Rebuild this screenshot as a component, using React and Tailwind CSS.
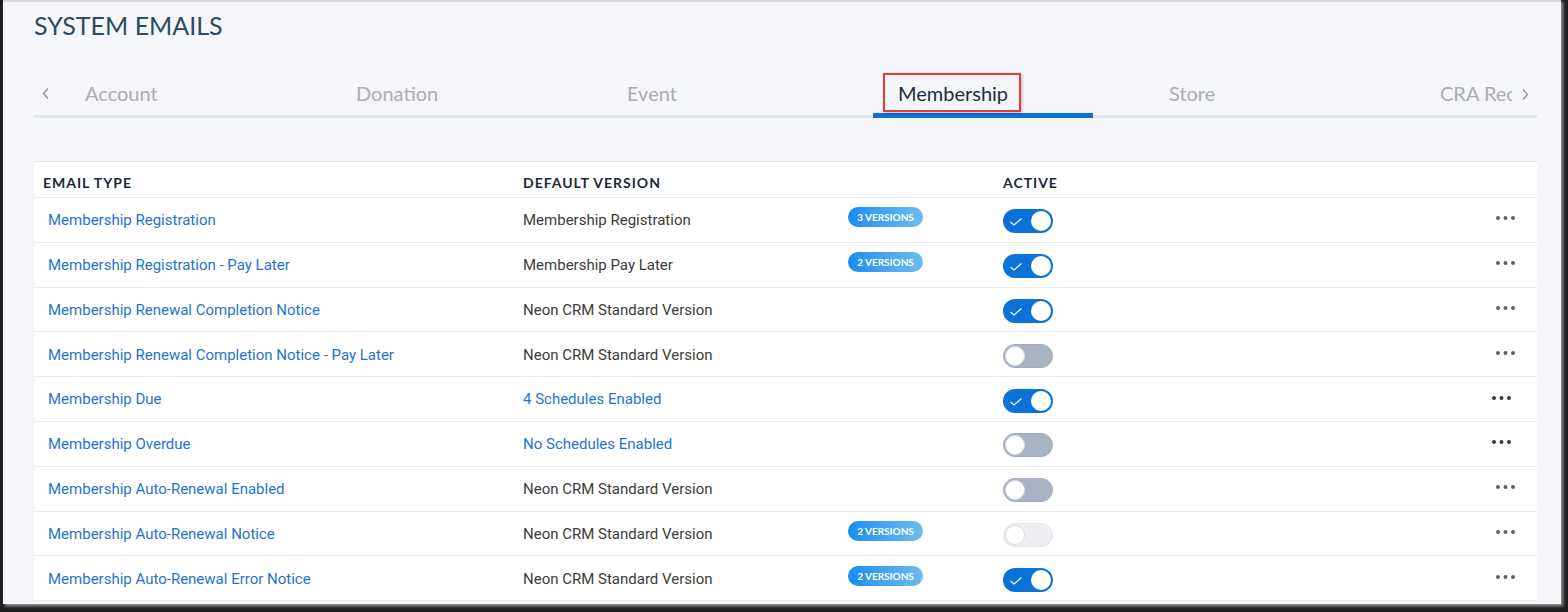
import React from 'react';

const tabs = ['Account', 'Donation', 'Event', 'Membership', 'Store', 'CRA Receipts'];

const rows = [
    { type: 'Membership Registration', version: 'Membership Registration', badge: '3 VERSIONS', active: 'on' },
    { type: 'Membership Registration - Pay Later', version: 'Membership Pay Later', badge: '2 VERSIONS', active: 'on' },
    { type: 'Membership Renewal Completion Notice', version: 'Neon CRM Standard Version', active: 'on' },
    { type: 'Membership Renewal Completion Notice - Pay Later', version: 'Neon CRM Standard Version', active: 'off' },
    { type: 'Membership Due', version: '4 Schedules Enabled', link: true, active: 'on', dark: true },
    { type: 'Membership Overdue', version: 'No Schedules Enabled', link: true, active: 'off', dark: true },
    { type: 'Membership Auto-Renewal Enabled', version: 'Neon CRM Standard Version', active: 'off' },
    { type: 'Membership Auto-Renewal Notice', version: 'Neon CRM Standard Version', badge: '2 VERSIONS', active: 'disabled' },
    { type: 'Membership Auto-Renewal Error Notice', version: 'Neon CRM Standard Version', badge: '2 VERSIONS', active: 'on' },
];

function Chevron({ dir }) {
    return (
        <svg width="8" height="11" viewBox="0 0 8 11" className="shrink-0">
            {dir === 'left'
                ? <polyline points="6,0.5 1.5,5.5 6,10.5" fill="none" stroke="#8c8c8c" strokeWidth="1.3" />
                : <polyline points="2,0.5 6.5,5.5 2,10.5" fill="none" stroke="#8c8c8c" strokeWidth="1.3" />}
        </svg>
    );
}

function Toggle({ state }) {
    if (state === 'on') {
        return (
            <div className="relative w-[50px] h-[24px] rounded-full bg-[#0b72d8] shrink-0 mt-[3px]">
                <svg width="12" height="8" viewBox="0 0 12 8" className="absolute left-[7px] top-[9px]">
                    <polyline points="0.5,4 4,7 11.5,0.5" fill="none" stroke="#ffffff" strokeWidth="1.1" />
                </svg>
                <div className="absolute right-[2px] top-[2px] w-[20px] h-[20px] rounded-full bg-white" />
            </div>
        );
    }
    const disabled = state === 'disabled';
    return (
        <div className={`relative w-[50px] h-[24px] rounded-full shrink-0 mt-[3px] border ${disabled ? 'bg-[#eceef2] border-[#e2e5ea]' : 'bg-[#a9b3c3] border-[#a3adbd]'}`}>
            <div className="absolute left-[1px] top-[1px] w-[20px] h-[20px] rounded-full bg-white border border-[#d8dce3]" />
        </div>
    );
}

function Dots({ dark }) {
    return (
        <svg width="19" height="4" viewBox="0 0 19 4" className="mb-[3px]">
            <circle cx="2" cy="2" r="2" fill={dark ? '#2e3944' : '#59636e'} />
            <circle cx="9.5" cy="2" r="2" fill={dark ? '#2e3944' : '#59636e'} />
            <circle cx="17" cy="2" r="2" fill={dark ? '#2e3944' : '#59636e'} />
        </svg>
    );
}

export default function App() {
    return (
        <div className="w-[1568px] h-[612px] bg-[#1f1f1f] overflow-hidden">
            <div className="ml-[3px] w-[1558px] h-[604px] bg-[#f4f6fa] border-t-2 border-[#d8d9dc] shadow-[2px_2px_3px_rgba(170,170,170,0.9)] overflow-hidden">
                <div className="pl-[31px] w-[1534px]">
                    <h1 className="pt-[8px] text-[25px] leading-[30px] text-[#2d4b60] font-['Lato',sans-serif] font-normal">SYSTEM EMAILS</h1>

                    {/* tabs */}
                    <div className="relative mt-[41px] flex border-b-[3px] border-[#e2e5ec] pl-[8px] font-['Lato',sans-serif]">
                        <div className="self-start mt-[7px]"><Chevron dir="left" /></div>
                        <div className="ml-[10px] w-[1452px] overflow-hidden -mb-[3px]">
                            <div className="flex gap-[51px]">
                                {tabs.map((t) => (
                                    <div
                                        key={t}
                                        className={`shrink-0 w-[220px] pl-[25px] pb-[8px] text-[20px] leading-[24px] whitespace-nowrap border-b-[5px] ${t === 'Membership' ? 'text-[#1d2d3b] border-[#0b72d8]' : 'text-[#adadad] border-transparent'}`}
                                    >
                                        {t}
                                    </div>
                                ))}
                            </div>
                        </div>
                        <div className="self-start mt-[8px] ml-[9px]"><Chevron dir="right" /></div>
                        <div className="absolute left-[849px] -top-[8px] w-[138px] h-[39px] border-2 border-[#e53b3d] shadow-[1px_1px_3px_rgba(0,0,0,0.25)] pointer-events-none" />
                    </div>

                    {/* table */}
                    <div className="mt-[43px] w-[1503px] bg-white border-t border-[#e1e4ea]">
                        <div className="flex h-[36px] pt-[12px] border-b border-[#e8ebf0] text-[14px] leading-[17px] font-bold tracking-[0.07em] text-[#1a2a39] font-['Lato',sans-serif]">
                            <div className="w-[489px] pl-[9px]">EMAIL TYPE</div>
                            <div className="w-[480px]">DEFAULT VERSION</div>
                            <div>ACTIVE</div>
                        </div>
                        {rows.map((r) => (
                            <div key={r.type} className="flex items-center h-[44.8px] border-b border-[#e8ebf0] text-[15px] font-['Roboto',sans-serif]">
                                <div className="w-[489px] pl-[14px] pt-[1px] text-[#1f74d3]">{r.type}</div>
                                <div className={`w-[325px] pt-[1px] ${r.link ? 'text-[#1f74d3]' : 'text-[#3c3c3c]'}`}>{r.version}</div>
                                <div className="w-[155px] flex">
                                    {r.badge && (
                                        <span className="mb-[5px] w-[75px] h-[20px] rounded-full bg-gradient-to-r from-[#158cf0] to-[#6cbdee] text-white text-[10px] leading-[20px] font-bold text-center font-['Lato',sans-serif]">
                                            {r.badge}
                                        </span>
                                    )}
                                </div>
                                <Toggle state={r.active} />
                                <div className={`flex-1 flex justify-end ${r.dark ? 'pr-[26px]' : 'pr-[22px]'}`}>
                                    <Dots dark={r.dark} />
                                </div>
                            </div>
                        ))}
                    </div>
                </div>
            </div>
        </div>
    );
}
